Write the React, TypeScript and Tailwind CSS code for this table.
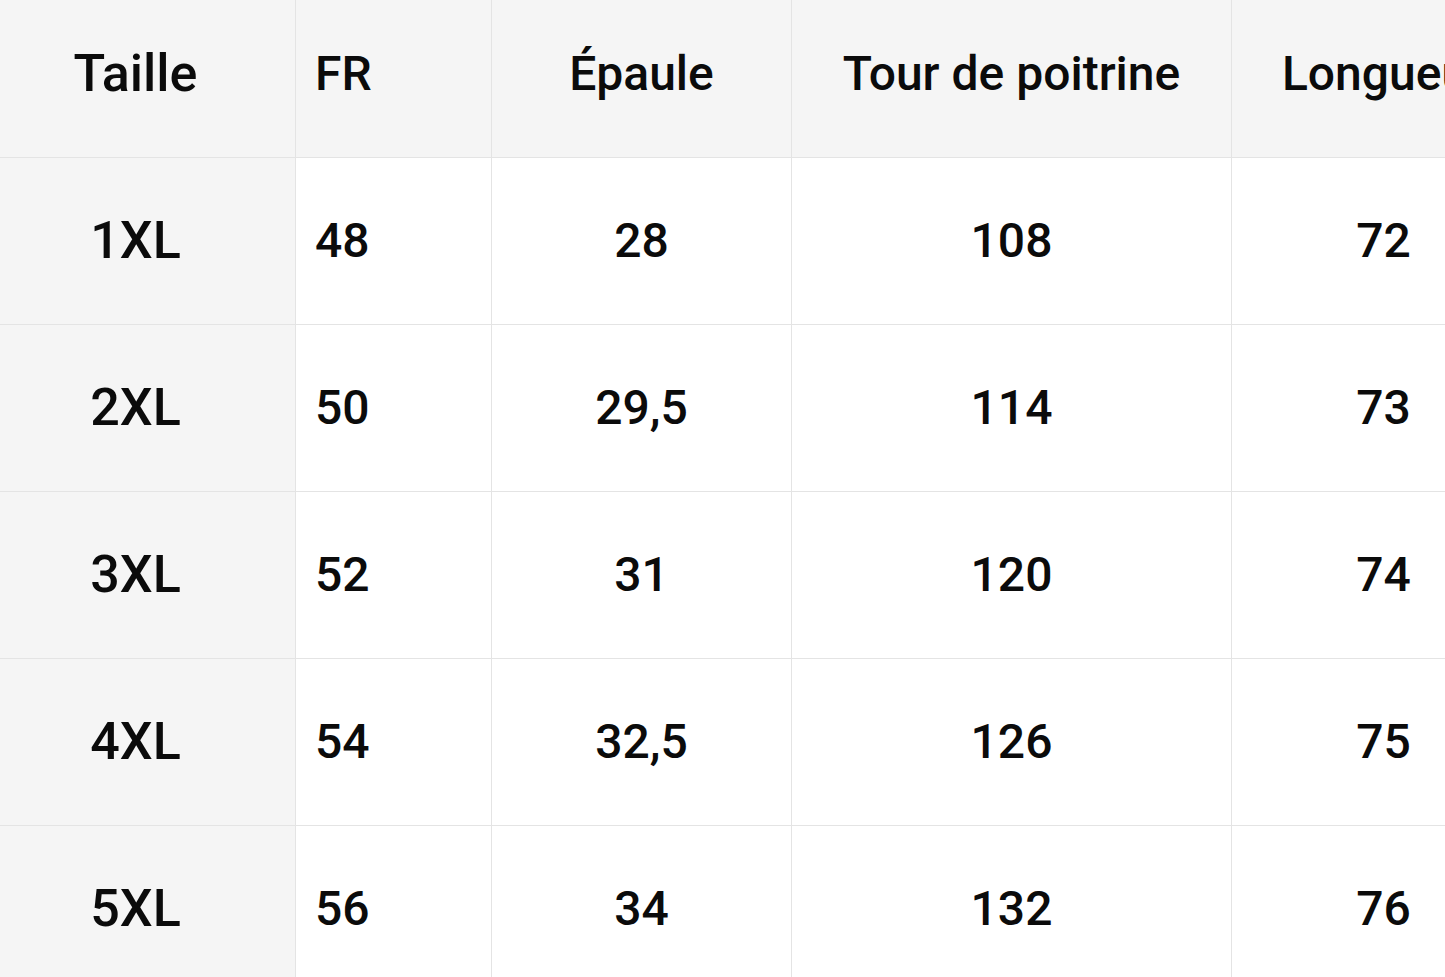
import React from "react";

const headers = ["Taille", "FR", "Épaule", "Tour de poitrine", "Longueur"];
const rows = [
  ["1XL", "48", "28", "108", "72"],
  ["2XL", "50", "29,5", "114", "73"],
  ["3XL", "52", "31", "120", "74"],
  ["4XL", "54", "32,5", "126", "75"],
  ["5XL", "56", "34", "132", "76"],
];

const align = [
  "justify-center pr-[24px] text-[52px]",
  "justify-start pl-[19px] text-[48px]",
  "justify-center text-[48px]",
  "justify-center text-[48px]",
  "justify-center text-[48px]",
];

export default function App() {
  return (
    <div
      className="w-[1445px] h-[977px] overflow-hidden bg-white text-[#0b0b0b]"
      style={{ fontFamily: "Roboto, 'Noto Sans', sans-serif" }}
    >
      <div className="grid grid-cols-[296px_196px_300px_440px_304px] w-max">
        {headers.map((h, i) => (
          <div
            key={h}
            className={`flex items-center ${align[i]} h-[158px] pb-[10px] bg-[#f5f5f5] border-r border-b border-[#e4e4e4] font-medium whitespace-nowrap`}
          >
            {h}
          </div>
        ))}
        {rows.map((r, ri) =>
          r.map((c, ci) => (
            <div
              key={`${ri}-${ci}`}
              className={`flex items-center ${align[ci]} h-[167px] ${
                ci === 0 ? "bg-[#f5f5f5]" : "bg-white"
              } border-r border-b border-[#e4e4e4] font-medium whitespace-nowrap`}
            >
              {c}
            </div>
          ))
        )}
      </div>
    </div>
  );
}
